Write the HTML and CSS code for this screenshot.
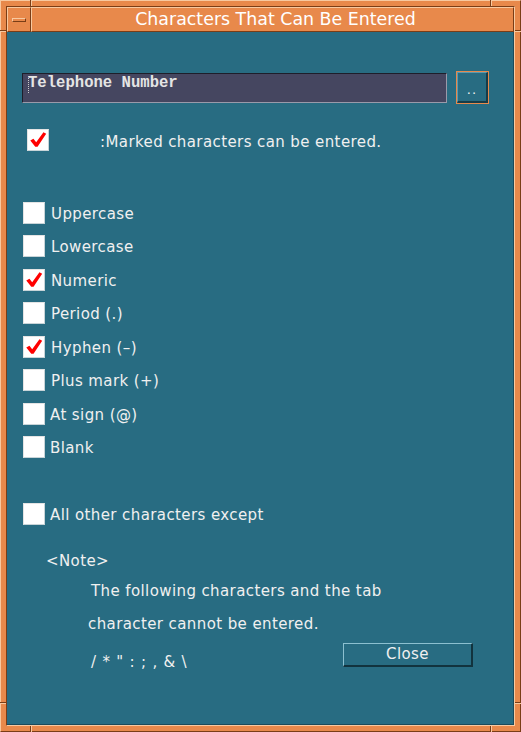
FILE: index.html
```html
<!DOCTYPE html>
<html>
<head>
<meta charset="utf-8">
<link rel="stylesheet" href="styles.css">
</head>
<body>
<div class="win">
  <span class="mark mark-v mark-tl"></span>
  <span class="mark mark-v mark-tr"></span>
  <span class="mark mark-v mark-bl"></span>
  <span class="mark mark-v mark-br"></span>
  <span class="mark mark-h mark-lt"></span>
  <span class="mark mark-h mark-rt"></span>
  <span class="mark mark-h mark-lb"></span>
  <span class="mark mark-h mark-rb"></span>
  <div class="inner">
    <div class="titlebar">
      <div class="menu-btn"><span class="menu-dash"></span></div>
      <div class="title">Characters That Can Be Entered</div>
    </div>
    <div class="content">
      <div class="field-row">
        <div class="field"><span class="caret"></span>Telephone Number</div>
        <div class="dots-btn"><div class="dots-face">..</div></div>
      </div>

      <div class="legend-row">
        <span class="box checked"><svg viewBox="0 0 22 22"><path d="M2.5 11.5 L6 9.5 L9 13.5 L17 2.5 L20 4 L10.5 18.5 L8 18.5 Z" fill="#ff0000"/></svg></span>
        <span class="legend-text">:Marked characters can be entered.</span>
      </div>

      <div class="list">
        <div class="row"><span class="box"></span><span class="label">Uppercase</span></div>
        <div class="row"><span class="box"></span><span class="label">Lowercase</span></div>
        <div class="row"><span class="box checked"><svg viewBox="0 0 22 22"><path d="M2.5 11.5 L6 9.5 L9 13.5 L17 2.5 L20 4 L10.5 18.5 L8 18.5 Z" fill="#ff0000"/></svg></span><span class="label">Numeric</span></div>
        <div class="row"><span class="box"></span><span class="label">Period (.)</span></div>
        <div class="row"><span class="box checked"><svg viewBox="0 0 22 22"><path d="M2.5 11.5 L6 9.5 L9 13.5 L17 2.5 L20 4 L10.5 18.5 L8 18.5 Z" fill="#ff0000"/></svg></span><span class="label">Hyphen (–)</span></div>
        <div class="row"><span class="box"></span><span class="label">Plus mark (+)</span></div>
        <div class="row"><span class="box"></span><span class="label tight">At sign (@)</span></div>
        <div class="row"><span class="box"></span><span class="label tight">Blank</span></div>
      </div>

      <div class="row all-row"><span class="box"></span><span class="label tight">All other characters except</span></div>

      <div class="note">&lt;Note&gt;</div>
      <div class="note-line l1">The following characters and the tab</div>
      <div class="note-line l2">character cannot be entered.</div>
      <div class="bottom-row">
        <div class="symbols">/ * " : ; , &amp; \</div>
        <div class="close-btn">Close</div>
      </div>
    </div>
  </div>
</div>
</body>
</html>
```

FILE: styles.css
```css
html, body {
  margin: 0;
  padding: 0;
  background: #e8894b;
}
.win {
  position: relative;
  width: 521px;
  height: 732px;
  box-sizing: border-box;
  background: #e8894b;
  border-top: 1px solid #f8c9a0;
  border-left: 1px solid #f8c9a0;
  border-right: 1px solid #7a3d16;
  border-bottom: 1px solid #7a3d16;
  padding: 5px;
  font-family: "DejaVu Sans", sans-serif;
}
.mark {
  position: absolute;
  display: block;
}
.mark-v {
  width: 1px;
  height: 6px;
  background: #7a3d16;
  box-shadow: 1px 0 0 #f8c9a0;
}
.mark-h {
  width: 6px;
  height: 1px;
  background: #7a3d16;
  box-shadow: 0 1px 0 #f8c9a0;
}
.mark-tl { left: 29px; top: -1px; }
.mark-tr { left: 489px; top: -1px; }
.mark-bl { left: 29px; bottom: -1px; }
.mark-br { left: 489px; bottom: -1px; }
.mark-lt { left: -1px; top: 29px; }
.mark-rt { right: -1px; top: 29px; }
.mark-lb { left: -1px; top: 701px; }
.mark-rb { right: -1px; top: 701px; }

.inner {
  height: 100%;
  box-sizing: border-box;
  border-top: 1px solid #7a3d16;
  border-left: 1px solid #7a3d16;
  border-right: 1px solid #f8c9a0;
  border-bottom: 1px solid #f8c9a0;
  display: flex;
  flex-direction: column;
}
.titlebar {
  height: 25px;
  display: flex;
  background: #e8894b;
  flex: none;
}
.menu-btn {
  width: 24px;
  box-sizing: border-box;
  border-top: 1px solid #f8c9a0;
  border-left: 1px solid #f8c9a0;
  border-right: 1px solid #7a3d16;
  border-bottom: 1px solid #7a3d16;
  display: flex;
  align-items: center;
  justify-content: center;
}
.menu-dash {
  display: block;
  width: 12px;
  height: 2px;
  background: #e8894b;
  border-top: 1px solid #f8c9a0;
  border-left: 1px solid #f8c9a0;
  border-right: 1px solid #7a3d16;
  border-bottom: 1px solid #7a3d16;
}
.title {
  flex: 1;
  box-sizing: border-box;
  border-top: 1px solid #f8c9a0;
  border-left: 1px solid #f8c9a0;
  border-right: 1px solid #7a3d16;
  border-bottom: 1px solid #7a3d16;
  color: #ffffff;
  font-size: 17.4px;
  line-height: 22px;
  text-align: center;
  padding-left: 6px;
}
.content {
  flex: 1;
  background: #286c82;
  color: #f0f0f0;
  font-size: 15px;
  letter-spacing: 0.4px;
  padding-left: 15px;
  border-bottom: 1px solid #1c4a5a;
  border-right: 1px solid #1c4a5a;
}
.field-row {
  display: flex;
  align-items: center;
  margin-top: 39px;
  height: 33px;
}
.field {
  width: 425px;
  height: 30px;
  box-sizing: border-box;
  background: #454660;
  border-top: 1px solid #1e1e2a;
  border-left: 1px solid #1e1e2a;
  border-right: 1px solid #9a9aaa;
  border-bottom: 1px solid #9a9aaa;
  font-family: "Liberation Mono", monospace;
  font-weight: bold;
  font-size: 15.6px;
  letter-spacing: 0;
  color: #e4e4e4;
  padding-left: 5px;
  line-height: 19px;
  position: relative;
}
.caret {
  position: absolute;
  left: 5px;
  top: 2px;
  width: 1px;
  height: 17px;
  border-left: 1px dotted #cccccc;
}
.dots-btn {
  margin-left: 9px;
  width: 33px;
  height: 33px;
  box-sizing: border-box;
  border: 1px solid #e8894b;
}
.dots-face {
  height: 100%;
  box-sizing: border-box;
  border-top: 1px solid #5a9ab0;
  border-left: 1px solid #5a9ab0;
  border-right: 2px solid #163c48;
  border-bottom: 2px solid #163c48;
  text-align: center;
  font-size: 13px;
  line-height: 34px;
  color: #f0f0f0;
  letter-spacing: 1px;
}
.legend-row {
  display: flex;
  align-items: center;
  margin-top: 25px;
  margin-left: 5px;
  height: 22px;
}
.legend-text {
  margin-left: 51px;
  position: relative;
  top: 2px;
}
.box {
  display: block;
  width: 22px;
  height: 22px;
  box-sizing: border-box;
  background: #ffffff;
  border-top: 1px solid #e4e4e4;
  border-left: 1px solid #e4e4e4;
  border-right: 1px solid #c8d4d8;
  border-bottom: 1px solid #c8d4d8;
  flex: none;
}
.box svg {
  display: block;
  width: 20px;
  height: 20px;
}
.list {
  margin-top: 45px;
  margin-left: 1px;
}
.row {
  display: flex;
  align-items: center;
  height: 33.5px;
}
.label {
  margin-left: 6px;
  position: relative;
  top: 1px;
}
.label.tight {
  margin-left: 5px;
}
.all-row {
  margin-top: 33px;
  margin-left: 1px;
}
.note {
  margin-top: 20px;
  margin-left: 24px;
  line-height: 20px;
}
.note-line {
  line-height: 33px;
}
.l1 {
  margin-top: 4px;
  margin-left: 69px;
}
.l2 {
  margin-left: 66px;
}
.bottom-row {
  display: flex;
  align-items: flex-start;
  margin-top: 2px;
}
.symbols {
  margin-left: 69px;
  margin-top: 9px;
  line-height: 20px;
  width: 252px;
  letter-spacing: 0.8px;
}
.close-btn {
  width: 130px;
  height: 24px;
  box-sizing: border-box;
  border-top: 1px solid #8cc0d0;
  border-left: 1px solid #8cc0d0;
  border-right: 2px solid #12333e;
  border-bottom: 2px solid #12333e;
  text-align: center;
  line-height: 20px;
  font-size: 15px;
}
```
